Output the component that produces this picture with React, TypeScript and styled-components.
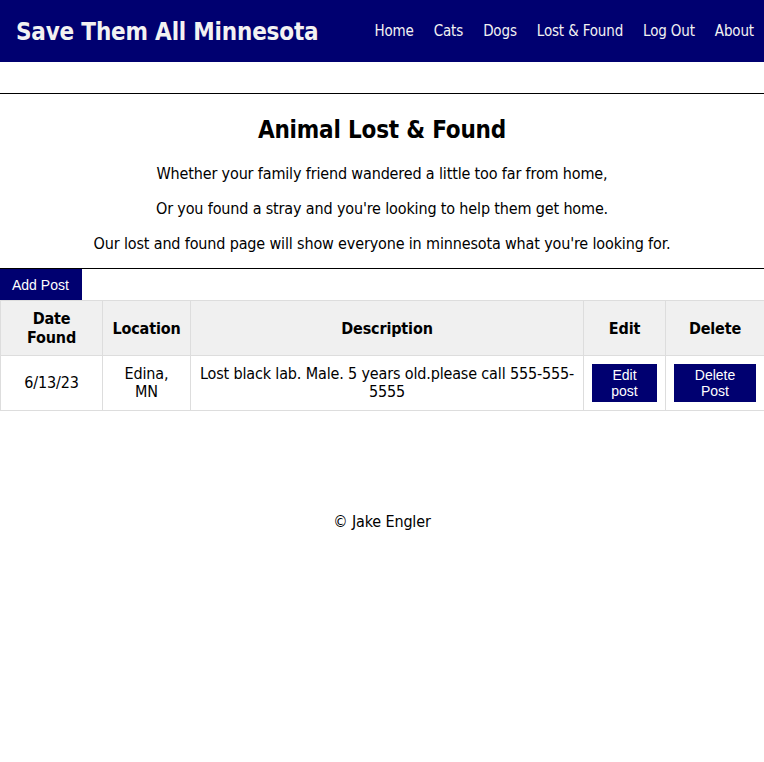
import React from "react";
import styled, { createGlobalStyle } from "styled-components";

const NAVY = "#000070";
const FONT = `"DejaVu Sans Condensed", "DejaVu Sans", Verdana, sans-serif`;
const BTN_FONT = `"Liberation Sans", Arial, sans-serif`;

const Global = createGlobalStyle`
  html, body { margin: 0; padding: 0; background: #fff; }
  body {
    font-family: ${FONT};
    font-stretch: condensed;
    color: #000;
    font-size: 16px;
    letter-spacing: -0.15px;
  }
`;

const Header = styled.header`
  height: 62px;
  background: ${NAVY};
  display: flex;
  align-items: center;
  justify-content: space-between;
  padding-left: 16px;
`;

const Brand = styled.div`
  color: #f2f2f2;
  font-size: 24px;
  font-weight: bold;
  letter-spacing: -0.2px;
  padding-top: 1px;
`;

const Nav = styled.nav`
  display: flex;
  align-items: center;
`;

const NavLink = styled.a`
  color: #f2f2f2;
  text-decoration: none;
  font-size: 15px;
  padding: 0 10px;
`;

const Rule = styled.div<{ $top?: number }>`
  margin-top: ${(p) => p.$top ?? 0}px;
  border-top: 1px solid #000;
`;

const Intro = styled.section`
  text-align: center;
  padding: 1px 0;
`;

const Title = styled.h1`
  font-size: 24px;
  line-height: 29px;
  font-weight: bold;
  letter-spacing: -0.2px;
  margin: 21px 0 19px;
`;

const Para = styled.p`
  margin: 16px 0;
  font-size: 16px;
  line-height: 19px;
  &:last-child {
    margin-bottom: 14px;
  }
`;

const Button = styled.button<{ $full?: boolean }>`
  background: ${NAVY};
  color: #fff;
  border: none;
  font-family: ${BTN_FONT};
  font-size: 14px;
  line-height: 16px;
  letter-spacing: 0;
  cursor: pointer;
  display: block;
  ${(p) =>
    p.$full
      ? `width: 100%; padding: 3px 8px;`
      : `height: 31px; padding: 0 13px 0 12px;`}
`;

const Table = styled.table`
  width: 100%;
  border-collapse: collapse;
  table-layout: fixed;
`;

const Th = styled.th`
  background: #f0f0f0;
  border: 1px solid #ddd;
  padding: 8px;
  font-size: 16px;
  font-weight: bold;
  text-align: center;
  line-height: 19px;
`;

const Td = styled.td`
  border: 1px solid #ddd;
  padding: 8px;
  font-size: 16px;
  text-align: center;
  line-height: 18px;
  vertical-align: middle;
`;

const Footer = styled.footer`
  text-align: center;
  padding-top: 101px;
  font-size: 16px;
`;

const cols = [102, 88, 393, 82, 99];

export default function App() {
  return (
    <>
      <Global />
      <Header>
        <Brand>Save Them All Minnesota</Brand>
        <Nav>
          <NavLink href="#">Home</NavLink>
          <NavLink href="#">Cats</NavLink>
          <NavLink href="#">Dogs</NavLink>
          <NavLink href="#">Lost &amp; Found</NavLink>
          <NavLink href="#">Log Out</NavLink>
          <NavLink href="#">About</NavLink>
        </Nav>
      </Header>
      <Rule $top={31} />
      <Intro>
        <Title>Animal Lost &amp; Found</Title>
        <Para>Whether your family friend wandered a little too far from home,</Para>
        <Para>Or you found a stray and you're looking to help them get home.</Para>
        <Para>Our lost and found page will show everyone in minnesota what you're looking for.</Para>
      </Intro>
      <Rule />
      <Button>Add Post</Button>
      <Table>
        <colgroup>
          {cols.map((w, i) => (
            <col key={i} style={{ width: w }} />
          ))}
        </colgroup>
        <thead>
          <tr>
            <Th>Date Found</Th>
            <Th>Location</Th>
            <Th>Description</Th>
            <Th>Edit</Th>
            <Th>Delete</Th>
          </tr>
        </thead>
        <tbody>
          <tr>
            <Td>6/13/23</Td>
            <Td>Edina, MN</Td>
            <Td>Lost black lab. Male. 5 years old.please call 555-555-5555</Td>
            <Td>
              <Button $full>Edit post</Button>
            </Td>
            <Td>
              <Button $full>Delete Post</Button>
            </Td>
          </tr>
        </tbody>
      </Table>
      <Footer>© Jake Engler</Footer>
    </>
  );
}
